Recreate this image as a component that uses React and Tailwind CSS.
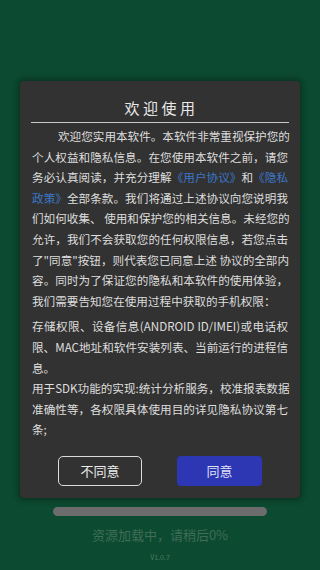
import React from "react";

const font = { fontFamily: '"Noto Sans CJK SC", "Noto Sans", sans-serif' };

function L({ children, full = true, className = "" }) {
  return (
    <div
      className={
        "leading-[20.6px] whitespace-nowrap " +
        (full ? "text-justify [text-align-last:justify] " : "") +
        className
      }
    >
      {children}
    </div>
  );
}

export default function App() {
  const link = "text-[#3b76c9]";
  return (
    <div
      className="w-[320px] h-[570px] bg-[#0c4a31] flex flex-col items-center pt-[81px] overflow-hidden"
      style={font}
    >
      <div className="w-[280px] bg-[#323232] rounded-[4px] shadow-[0_0_6px_2px_rgba(0,0,0,0.35)] px-[12px] pt-[17px] pb-[12px] flex flex-col">
        <div className="text-center text-[15px] leading-[20px] tracking-[3.5px] pl-[3px] text-[#e8e8e8]">
          欢迎使用
        </div>
        <div className="mt-[4px] h-px bg-[#c8c8c8] mx-[-1px]" />
        <div className="mt-[3px] text-[11.6px] text-[#dedede]">
          <L className="pl-[26px]">欢迎您实用本软件。本软件非常重视保护您的</L>
          <L>个人权益和隐私信息。在您使用本软件之前，请您</L>
          <L>
            务必认真阅读，并充分理解<span className={link}>《用户协议》</span>和
            <span className={link}>《隐私</span>
          </L>
          <L>
            <span className={link}>政策》</span>全部条款。我们将通过上述协议向您说明我
          </L>
          <L>们如何收集、 使用和保护您的相关信息。未经您的</L>
          <L>允许，我们不会获取您的任何权限信息，若您点击</L>
          <L>了"同意"按钮，则代表您已同意上述 协议的全部内</L>
          <L>容。同时为了保证您的隐私和本软件的使用体验，</L>
          <L full={false}>我们需要告知您在使用过程中获取的手机权限：</L>
          <div className="mt-[5px]">
            <L>存储权限、设备信息(ANDROID ID/IMEI)或电话权</L>
            <L>限、MAC地址和软件安装列表、当前运行的进程信</L>
            <L full={false}>息。</L>
            <L>用于SDK功能的实现:统计分析服务，校准报表数据</L>
            <L>准确性等，各权限具体使用目的详见隐私协议第七</L>
            <L full={false}>条;</L>
          </div>
        </div>
        <div className="mt-[16px] flex justify-center gap-[35px]">
          <div className="w-[84px] h-[30px] rounded-[5px] border border-[#dcdcdc] flex items-center justify-center text-[13px] text-[#ececec]">
            不同意
          </div>
          <div className="w-[85px] h-[30px] rounded-[4px] bg-[#2d36b3] flex items-center justify-center text-[13px] text-[#dfe0f5]">
            同意
          </div>
        </div>
      </div>
      <div className="mt-[9px] w-[214px] h-[9px] rounded-full bg-[#6c6c6c]" />
      <div className="mt-[10px] text-[13px] leading-[18px] text-[#3f6d55]">
        资源加载中，请稍后0%
      </div>
      <div className="mt-[8px] text-[7px] leading-[10px] text-[#4d7a62]">V1.0.7</div>
    </div>
  );
}
